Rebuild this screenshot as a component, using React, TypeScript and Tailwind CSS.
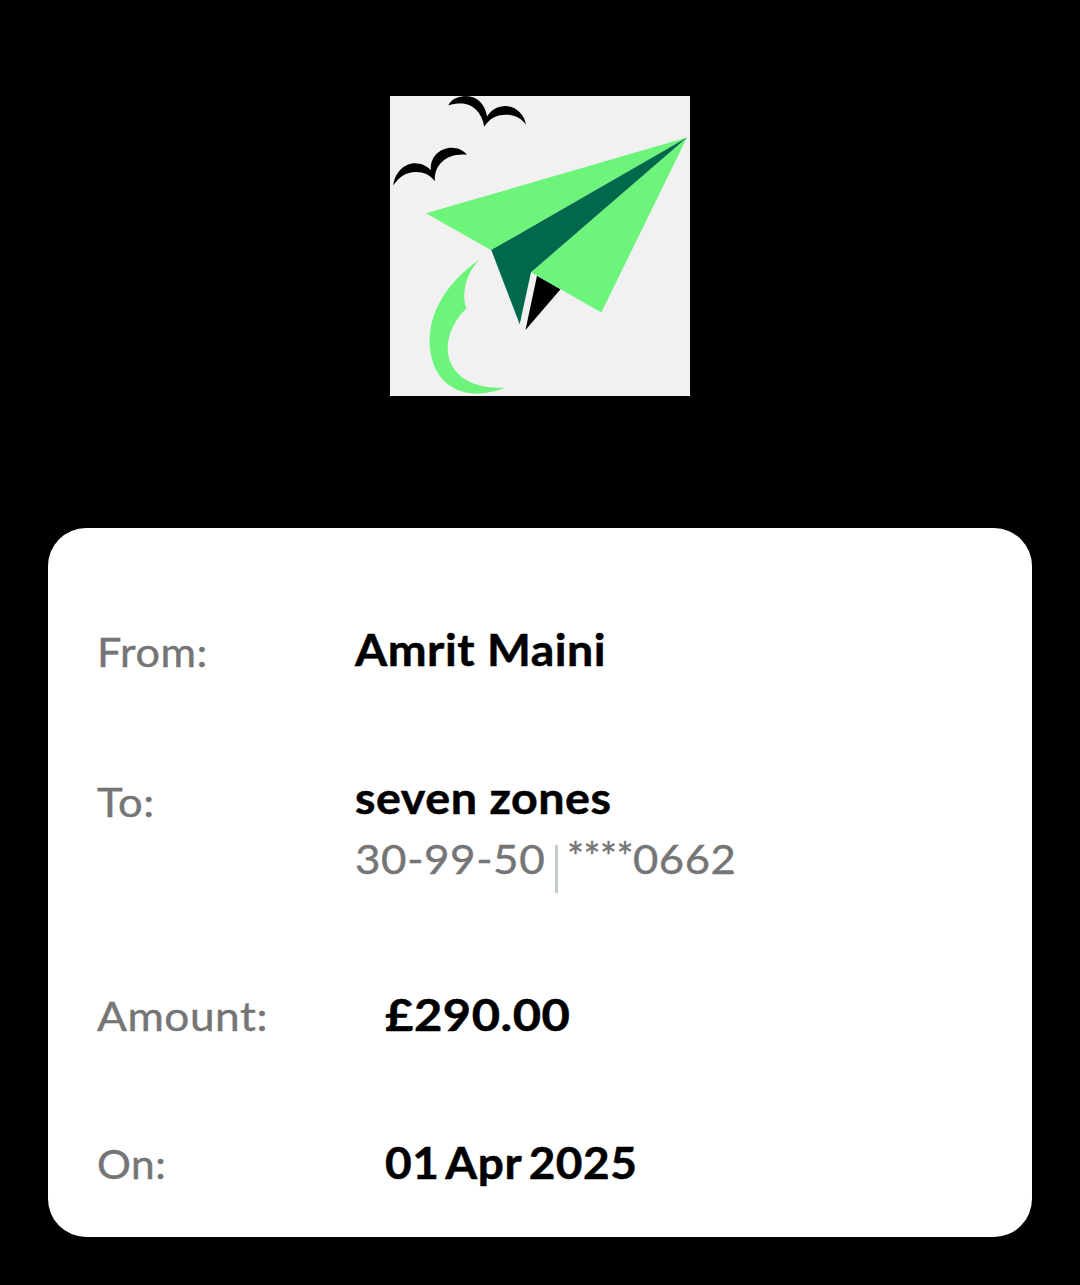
function PlaneLogo() {
  return (
    <svg viewBox="0 0 300 300" className="size-[300px] shrink-0 bg-[#f1f1f1]" aria-hidden="true">
      <path fill="#000" d="M58.3 9.5C61 3.5 68 0 76 0C87 0 95.500 8.500 97 20.500C101 14 108 10 115.700 10C126 10 134.500 18.500 136 28.700C131.500 22 124 18.700 115.500 18.700C106 18.700 99 23 94.300 30.700C92 17 83 7.500 71 7.500C66 7.500 62 8 58.300 9.500Z" />
      <path fill="#000" d="M3.300 89.500C4.500 77 14 67.200 25 67.200C31.500 67.200 37 70 41 74.300C39.500 61 50 51.700 61.700 51.700C68 51.700 74 54.500 76.900 58.700C58 56.500 43.500 68 44.900 85.300C40 79 34 76 26 76C16 76 9 81 3.300 89.500Z" />
      <path fill="#000" d="M147 179.700L170.500 193.200L135.500 234Z" />
      <path fill="#6cf57a" d="M297 41.500L36 117.300L101.300 154.200ZM297 41.500L141 176.300L211.300 216.500Z" />
      <path fill="#00694c" d="M297 41.500L101.300 154L129.700 228.300L141 176.300Z" />
      <path fill="#6cf57a" d="M89.500 163.500C60 184 39.600 213 39.600 245C39.600 276 58 297.500 86 297.500C97 297.500 107 295 115.500 291.500C80 294 57.700 277 57.700 252C57.700 237 66 222 76.500 212.500C72 202 73.500 180 89.500 163.500Z" />
    </svg>
  );
}

const label = "shrink-0 pl-px text-[40px] leading-[60px] text-[#757575] whitespace-nowrap [-webkit-text-stroke:0.4px_#757575]";
const value = "text-[44px] leading-[60px] font-bold text-black whitespace-nowrap [-webkit-text-stroke:0.5px_#000]";
const wide = "inline-block origin-left tracking-[0.5px]";

export default function App() {
  return (
    <main className="flex h-[1285px] w-[1080px] flex-col items-center overflow-hidden bg-black pt-24 font-['Lato',sans-serif]">
      <PlaneLogo />
      <section className="mt-[132px] flex h-[709px] w-[984px] flex-col rounded-[38px] bg-white px-12 pt-[91px]">
        <div className="flex h-[148px] items-start">
          <div className={`${label} w-[259px] pt-[3px]`}><span className={`${wide} scale-x-[1.08]`}>From:</span></div>
          <div className={value}><span className={`${wide} scale-x-[1.055]`}>Amrit Maini</span></div>
        </div>
        <div className="flex h-[217px] items-start">
          <div className={`${label} w-[259px] pt-[5px]`}><span className={`${wide} scale-x-[1.09]`}>To:</span></div>
          <div>
            <div className={value}><span className={`${wide} scale-x-[1.06]`}>seven zones</span></div>
            <div className="mt-[2px] flex items-start text-[40px] leading-[60px] text-[#757575] [-webkit-text-stroke:0.4px_#757575]">
              <span className="w-[200px] whitespace-nowrap"><span className={`${wide} scale-x-[1.1]`}>30-99-50</span></span>
              <span className="mt-4 h-[48px] w-[3px] bg-[#c2cacc]" />
              <span className="-mt-[2px] ml-[9px] w-[66px] tracking-[-0.5px]">****</span>
              <span className={`${wide} scale-x-[1.09]`}>0662</span>
            </div>
          </div>
        </div>
        <div className="flex h-[148px] items-start">
          <div className={`${label} w-[289px] pt-[2px]`}><span className={`${wide} scale-x-[1.105]`}>Amount:</span></div>
          <div className={value}><span className={`${wide} scale-x-[1.11]`}>£290.00</span></div>
        </div>
        <div className="flex items-start">
          <div className={`${label} w-[289px] pt-[2px]`}><span className={`${wide} scale-x-[1.06]`}>On:</span></div>
          <div className={value}><span className={`${wide} scale-x-[1.045] [word-spacing:-4px]`}>01 Apr 2025</span></div>
        </div>
      </section>
    </main>
  );
}
